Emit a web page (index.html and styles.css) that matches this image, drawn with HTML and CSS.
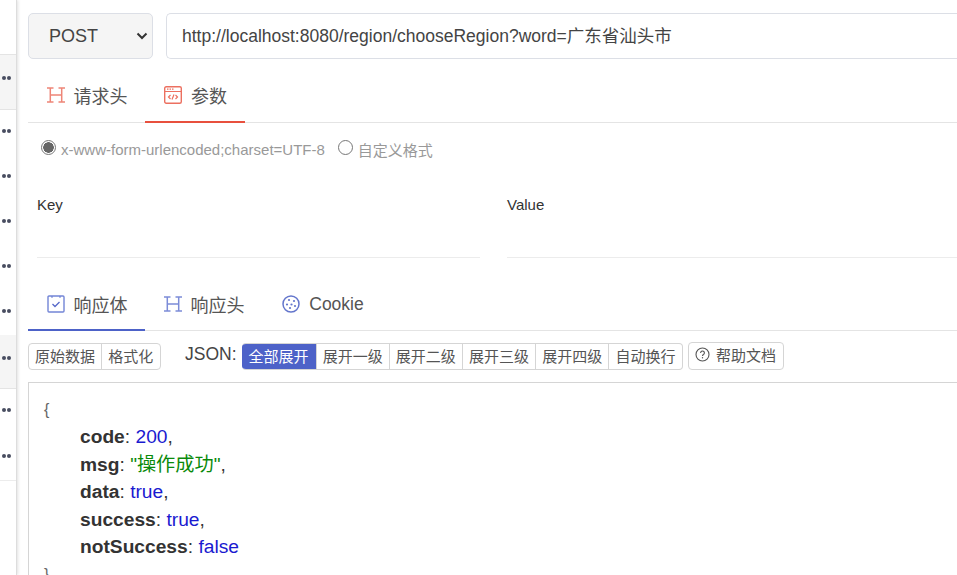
FILE: index.html
```html
<!DOCTYPE html>
<html lang="zh">
<head>
<meta charset="utf-8">
<title>API</title>
<link rel="stylesheet" href="styles.css">
</head>
<body>
<div class="app">
  <aside class="side">
    <div class="row r1"></div>
    <div class="row r2 sel"><i></i></div>
    <div class="row r3"><i></i></div>
    <div class="row r3"><i></i></div>
    <div class="row r3"><i></i></div>
    <div class="row r3"><i></i></div>
    <div class="row r3"><i></i></div>
    <div class="row r4 sel"><i></i></div>
    <div class="row r5"><i></i></div>
    <div class="row r5 last"><i></i></div>
  </aside>
  <main class="main">
    <div class="urlbar">
      <div class="method"><span>POST</span><svg class="chev" width="12" height="8" viewBox="0 0 12 8"><path d="M1.500 1.500 6 6l4.500-4.500" fill="none" stroke="#333" stroke-width="2"/></svg></div>
      <div class="url">http://localhost:8080/region/chooseRegion?word=广东省汕头市</div>
    </div>
    <div class="tabs req">
      <div class="tab"><svg class="ico" width="18" height="16" viewBox="0 0 18 16"><path d="M0 1h6.500M0 15h6.500M11.500 1H18M11.500 15H18M3.300 1v14M14.700 1v14M3.300 8h11.400" fill="none" stroke="#ee8577" stroke-width="1.500"/></svg>请求头</div>
      <div class="tab on"><svg class="ico" width="18" height="18" viewBox="0 0 18 18"><rect x=".7" y=".7" width="16.600" height="16.600" rx="1.500" fill="none" stroke="#ec7060" stroke-width="1.400"/><path d="M1 5.500h16M3 3.200h1.500M5.500 3.200h1.500M8 3.200h1.500M6.500 9 4.500 11l2 2M11.500 9l2 2-2 2M10 8.500l-2 5" fill="none" stroke="#ec7060" stroke-width="1.200"/></svg>参数</div>
    </div>
    <div class="radios">
      <span class="radio checked"></span><span class="rlabel">x-www-form-urlencoded;charset=UTF-8</span>
      <span class="radio second"></span><span class="rlabel">自定义格式</span>
    </div>
    <div class="kv">
      <div class="col"><div class="head">Key</div><div class="cell"></div></div>
      <div class="col wide"><div class="head">Value</div><div class="cell"></div></div>
    </div>
    <div class="tabs res">
      <div class="tab on"><svg class="ico" width="18" height="18" viewBox="0 0 18 18"><path d="M5 1H2a1 1 0 0 0-1 1v14a1 1 0 0 0 1 1h14a1 1 0 0 0 1-1V2a1 1 0 0 0-1-1h-3M5 .7v2M13 .7v2M5 1h8" fill="none" stroke="#7385d6" stroke-width="1.400"/><path d="m5.500 9 2.500 2.500 4.500-4.500" fill="none" stroke="#5567c8" stroke-width="1.300"/></svg>响应体</div>
      <div class="tab"><svg class="ico" width="18" height="16" viewBox="0 0 18 16"><path d="M0 1h6.500M0 15h6.500M11.500 1H18M11.500 15H18M3.300 1v14M14.700 1v14M3.300 8h11.400" fill="none" stroke="#7c8cd8" stroke-width="1.500"/></svg>响应头</div>
      <div class="tab cookie"><svg class="ico" width="18" height="18" viewBox="0 0 18 18"><circle cx="9" cy="9" r="8" fill="none" stroke="#6476cc" stroke-width="1.500"/><g fill="#6476cc"><circle cx="7" cy="5" r="1.100"/><circle cx="12" cy="6" r="1.100"/><circle cx="5" cy="9.500" r="1.100"/><circle cx="9.500" cy="9.500" r="1.100"/><circle cx="13" cy="11" r="1.100"/><circle cx="8" cy="13" r="1.100"/></g></svg>Cookie</div>
    </div>
    <div class="toolbar">
      <div class="group first"><span class="btn">原始数据</span><span class="btn">格式化</span></div>
      <span class="json-label">JSON:</span>
      <div class="group json"><span class="btn act">全部展开</span><span class="btn">展开一级</span><span class="btn">展开二级</span><span class="btn">展开三级</span><span class="btn">展开四级</span><span class="btn">自动换行</span></div>
      <span class="btn help"><svg width="15" height="15" viewBox="0 0 15 15"><circle cx="7.500" cy="7.500" r="6.500" fill="none" stroke="#555" stroke-width="1.100"/><path d="M5.600 5.900a1.900 1.900 0 1 1 2.900 1.600c-.7.400-1 .8-1 1.500" fill="none" stroke="#555" stroke-width="1.100"/><circle cx="7.500" cy="10.800" r=".7" fill="#555"/></svg>帮助文档</span>
    </div>
    <div class="output">
      <div class="brace">{</div>
      <div class="line"><b>code</b>: <span class="num">200</span>,</div>
      <div class="line"><b>msg</b>: <span class="str">"操作成功"</span>,</div>
      <div class="line"><b>data</b>: <span class="num">true</span>,</div>
      <div class="line"><b>success</b>: <span class="num">true</span>,</div>
      <div class="line"><b>notSuccess</b>: <span class="num">false</span></div>
      <div class="brace">}</div>
    </div>
  </main>
</div>
</body>
</html>
```
FILE: styles.css
```css
* { box-sizing: border-box; }
html, body { margin: 0; height: 100%; overflow: hidden; background: #fff; }
body { font-family: "Liberation Sans", "Noto Sans CJK SC", sans-serif; color: #333; }
.app { display: flex; width: 957px; height: 575px; overflow: hidden; }
.side { width: 17px; flex: none; border-right: 1px solid #ddd; box-shadow: 1px 0 3px rgba(0,0,0,.12); background: #fff; }
.row { display: flex; padding-left: 2px; overflow: hidden; }
.row i { display: block; width: 4px; height: 4px; border-radius: 50%; background: #484d60; box-shadow: 5px 0 0 #484d60; }
.r1 { height: 55px; border-bottom: 1px solid #e4e4e4; }
.r2 { height: 55px; padding-top: 21px; border-bottom: 1px solid #e4e4e4; }
.r3 { height: 45px; padding-top: 19px; }
.r4 { height: 54px; padding-top: 21px; border-bottom: 1px solid #e4e4e4; }
.r5 { height: 45px; padding-top: 19px; }
.last { height: 47px; padding-top: 20px; border-bottom: 1px solid #ececec; }
.sel { background: #f5f5f5; }
.main { flex: 1; min-width: 0; padding: 13px 0 0 11px; }
.urlbar { display: flex; gap: 13px; height: 46px; width: 960px; }
.method { width: 125px; flex: none; background: #f5f5f5; border: 1px solid #dcdfe6; border-radius: 5px; display: flex; align-items: center; justify-content: space-between; padding: 0 4px 0 20px; font-size: 18px; color: #444; }
.url { flex: 1; border: 1px solid #dcdfe6; border-radius: 5px 0 0 5px; border-right: 0; display: flex; align-items: center; padding: 0 0 3px 15px; font-size: 17.500px; color: #444; white-space: nowrap; }
.tabs { display: flex; width: 940px; }
.tab { width: 117px; display: flex; align-items: center; justify-content: center; gap: 9px; padding-left: 1px; font-size: 18px; color: #555; white-space: nowrap; border-bottom: 2px solid transparent; }
.req { margin-top: 14px; height: 50px; border-bottom: 1px solid #e4e4e4; }
.req .tab { height: 50px; padding-bottom: 4px; }
.req .tab.on { width: 100px; border-bottom-color: #e8503e; }
.radios { display: flex; align-items: center; height: 54px; padding-bottom: 2px; padding-left: 13px; font-size: 15px; color: #999; }
.radio { width: 15px; height: 15px; border-radius: 50%; border: 1px solid #777; flex: none; margin-right: 5px; margin-bottom: 4px; }
.radio.checked { background: radial-gradient(circle, #666 0 5px, #fff 5.500px); }
.radio.second { margin-left: 13px; }
.kv { display: flex; gap: 27px; margin-top: 12px; padding-left: 9px; width: 960px; }
.col { width: 443px; flex: none; }
.col.wide { flex: 1; }
.head { height: 32px; font-size: 15px; color: #333; padding-top: 7px; }
.cell { height: 37px; border-bottom: 1px solid #ececec; }
.res { margin-top: 27px; height: 46px; border-bottom: 1px solid #e4e4e4; }
.res .tab { height: 46px; padding-bottom: 6px; }
.res .tab.on { border-bottom-color: #4d62c8; }
.res .tab.cookie { width: 120px; padding-left: 2px; font-size: 17.500px; }
.toolbar { display: flex; align-items: flex-start; margin-top: 12px; height: 28px; }
.group { display: flex; border: 1px solid #d5d5d5; border-radius: 4px; overflow: hidden; height: 27px; }
.group.first { width: 133px; }
.group.json { border-left: 0; }
.btn { font-size: 15px; color: #555; display: flex; align-items: center; padding: 0 6.100px 3px; border-left: 1px solid #d5d5d5; height: 100%; white-space: nowrap; }
.btn:first-child { border-left: 0; }
.act { background: #4d62c8; color: #fff; padding: 0 7px 3px; }
.json-label { font-size: 17.500px; margin: 0 5px 0 24px; line-height: 22px; color: #444; }
.help { border: 1px solid #d5d5d5; border-radius: 4px; height: 28px; margin-left: 5px; margin-top: -1px; padding: 0 6.500px 3px; gap: 6px; }
.output { border: 1px solid #d5d5d5; border-right: 0; margin-top: 11px; width: 950px; height: 220px; padding: 13px 15px; font-size: 19.200px; line-height: 27.500px; color: #333; }
.brace { font-size: 16px; color: #666; height: 27px; line-height: 27px; }
.line { padding-left: 36px; white-space: nowrap; }
.num { color: #1a1ad0; }
.str { color: #0a8a0a; }
b { font-weight: 700; }
```
